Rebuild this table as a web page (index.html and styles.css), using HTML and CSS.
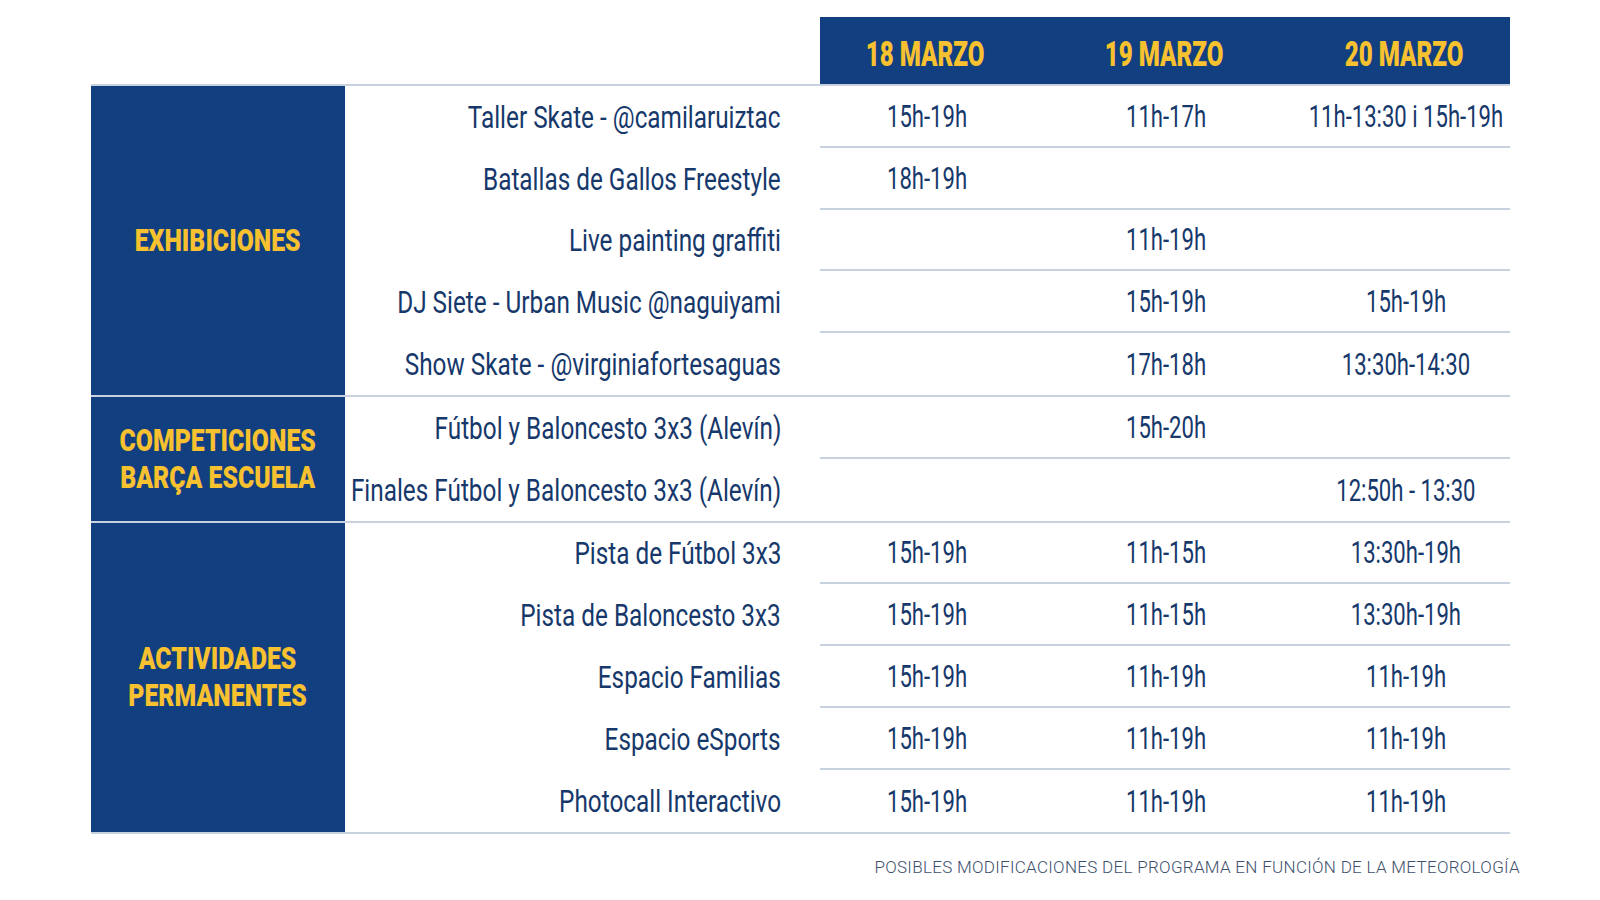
FILE: index.html
```html
<!DOCTYPE html>
<html lang="es">
<head>
<meta charset="utf-8">
<title>Programa</title>
<link rel="stylesheet" href="styles.css">
</head>
<body>
<div class="page">
  <div class="head">
    <div class="head-gap"></div>
    <div class="date"><span>18 MARZO</span></div>
    <div class="date"><span>19 MARZO</span></div>
    <div class="date"><span>20 MARZO</span></div>
  </div>
  <div class="body">
    <div class="group">
      <div class="cat"><span>EXHIBICIONES</span></div>
      <div class="rows">
        <div class="row"><div class="lbl"><span>Taller Skate - @camilaruiztac</span></div><div class="t"><span>15h-19h</span></div><div class="t"><span>11h-17h</span></div><div class="t"><span>11h-13:30 i 15h-19h</span></div></div>
        <div class="row"><div class="lbl"><span>Batallas de Gallos Freestyle</span></div><div class="t"><span>18h-19h</span></div><div class="t"></div><div class="t"></div></div>
        <div class="row"><div class="lbl"><span>Live painting graffiti</span></div><div class="t"></div><div class="t"><span>11h-19h</span></div><div class="t"></div></div>
        <div class="row"><div class="lbl"><span>DJ Siete - Urban Music @naguiyami</span></div><div class="t"></div><div class="t"><span>15h-19h</span></div><div class="t"><span>15h-19h</span></div></div>
        <div class="row"><div class="lbl"><span>Show Skate - @virginiafortesaguas</span></div><div class="t"></div><div class="t"><span>17h-18h</span></div><div class="t"><span>13:30h-14:30</span></div></div>
      </div>
    </div>
    <div class="group">
      <div class="cat"><span>COMPETICIONES<br>BARÇA ESCUELA</span></div>
      <div class="rows">
        <div class="row"><div class="lbl"><span>Fútbol y Baloncesto 3x3 (Alevín)</span></div><div class="t"></div><div class="t"><span>15h-20h</span></div><div class="t"></div></div>
        <div class="row"><div class="lbl"><span>Finales Fútbol y Baloncesto 3x3 (Alevín)</span></div><div class="t"></div><div class="t"></div><div class="t"><span>12:50h - 13:30</span></div></div>
      </div>
    </div>
    <div class="group">
      <div class="cat"><span>ACTIVIDADES<br>PERMANENTES</span></div>
      <div class="rows">
        <div class="row"><div class="lbl"><span>Pista de Fútbol 3x3</span></div><div class="t"><span>15h-19h</span></div><div class="t"><span>11h-15h</span></div><div class="t"><span>13:30h-19h</span></div></div>
        <div class="row"><div class="lbl"><span>Pista de Baloncesto 3x3</span></div><div class="t"><span>15h-19h</span></div><div class="t"><span>11h-15h</span></div><div class="t"><span>13:30h-19h</span></div></div>
        <div class="row"><div class="lbl"><span>Espacio Familias</span></div><div class="t"><span>15h-19h</span></div><div class="t"><span>11h-19h</span></div><div class="t"><span>11h-19h</span></div></div>
        <div class="row"><div class="lbl"><span>Espacio eSports</span></div><div class="t"><span>15h-19h</span></div><div class="t"><span>11h-19h</span></div><div class="t"><span>11h-19h</span></div></div>
        <div class="row"><div class="lbl"><span>Photocall Interactivo</span></div><div class="t"><span>15h-19h</span></div><div class="t"><span>11h-19h</span></div><div class="t"><span>11h-19h</span></div></div>
      </div>
    </div>
  </div>
  <div class="note">POSIBLES MODIFICACIONES DEL PROGRAMA EN FUNCIÓN DE LA METEOROLOGÍA</div>
</div>
</body>
</html>
```
FILE: styles.css
```css
html, body {
  margin: 0;
  padding: 0;
  background: #ffffff;
}

.page {
  width: 1600px;
  height: 900px;
  box-sizing: border-box;
  padding: 17px 0 0 91px;
  font-family: Roboto, "Liberation Sans", sans-serif;
  color: #16386b;
}

.head {
  display: grid;
  grid-template-columns: 729px 210px 268px 212px;
  width: 1419px;
  height: 67px;
}

.date {
  background: #123f7f;
  display: flex;
  align-items: center;
  justify-content: center;
  padding-top: 8px;
  box-sizing: border-box;
}

.date span,
.cat span {
  display: inline-block;
  white-space: nowrap;
  font-weight: 900;
  color: #f8c12f;
  transform-origin: center;
  flex-shrink: 0;
}

.date span {
  font-size: 35px;
  line-height: 1;
  transform: scaleX(0.69);
}

.body {
  width: 1419px;
  border-top: 2px solid #c8d2de;
}

.group {
  display: grid;
  grid-template-columns: 254px 1fr;
  border-bottom: 2px solid #c8d2de;
}

.cat {
  background: #123f7f;
  display: flex;
  align-items: center;
  justify-content: center;
  text-align: center;
}

.cat span {
  font-size: 31px;
  line-height: 37px;
  transform: scaleX(0.8);
}

.row {
  display: grid;
  grid-template-columns: 475px 210px 268px 212px;
  height: 61.8px;
}

.lbl {
  display: flex;
  align-items: center;
  justify-content: flex-end;
  padding: 0 39px 0 0;
}

.lbl span,
.t span {
  display: inline-block;
  white-space: nowrap;
  flex-shrink: 0;
  font-size: 32px;
  line-height: 1;
  font-weight: 400;
}

.lbl span {
  transform: scaleX(0.76);
  transform-origin: right center;
}

.t {
  display: flex;
  align-items: center;
  justify-content: center;
  padding-bottom: 0;
  box-sizing: border-box;
  border-bottom: 2px solid #c8d2de;
}

.row:last-child .t {
  border-bottom: none;
}

.t span {
  transform: scaleX(0.69);
  transform-origin: center;
  margin-left: 4px;
}

.note {
  margin-top: 23px;
  width: 1429px;
  text-align: right;
  font-size: 17px;
  line-height: 20px;
  font-weight: 300;
  letter-spacing: 0.3px;
  color: #3d506c;
  white-space: nowrap;
}
```
